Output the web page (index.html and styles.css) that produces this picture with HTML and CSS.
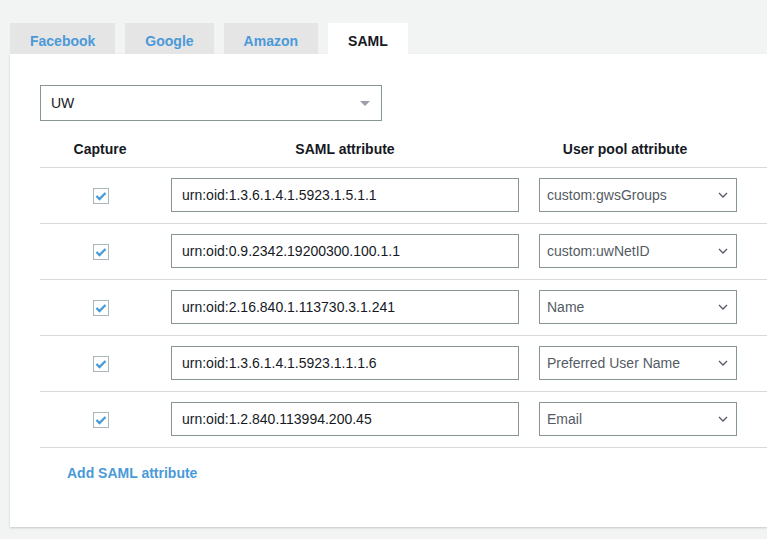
FILE: index.html
```html
<!DOCTYPE html>
<html>
<head>
<meta charset="utf-8">
<link rel="stylesheet" href="styles.css">
</head>
<body>
<div class="tabs">
  <div class="tab">Facebook</div>
  <div class="tab">Google</div>
  <div class="tab">Amazon</div>
  <div class="tab active">SAML</div>
</div>
<div class="panel">
  <div class="provider">
    <span>UW</span>
    <svg class="caret" width="12" height="7" viewBox="0 0 12 7"><path d="M1 1 L11 1 L6 6 Z" fill="#9aa0a6"/></svg>
  </div>
  <div class="table">
    <div class="row head">
      <div class="c1">Capture</div>
      <div class="c2">SAML attribute</div>
      <div class="c3">User pool attribute</div>
    </div>
    <div class="row">
      <div class="c1"><span class="check"><svg width="12" height="10" viewBox="0 0 12 10"><path d="M1.5 5 L4.5 8 L10.5 2" fill="none" stroke="#4a9ad8" stroke-width="2.4"/></svg></span></div>
      <div class="c2"><div class="field">urn:oid:1.3.6.1.4.1.5923.1.5.1.1</div></div>
      <div class="c3"><div class="pick"><span>custom:gwsGroups</span><svg width="10" height="6" viewBox="0 0 10 6"><path d="M1 1 L5 5 L9 1" fill="none" stroke="#545b64" stroke-width="1.3"/></svg></div></div>
    </div>
    <div class="row">
      <div class="c1"><span class="check"><svg width="12" height="10" viewBox="0 0 12 10"><path d="M1.5 5 L4.5 8 L10.5 2" fill="none" stroke="#4a9ad8" stroke-width="2.4"/></svg></span></div>
      <div class="c2"><div class="field">urn:oid:0.9.2342.19200300.100.1.1</div></div>
      <div class="c3"><div class="pick"><span>custom:uwNetID</span><svg width="10" height="6" viewBox="0 0 10 6"><path d="M1 1 L5 5 L9 1" fill="none" stroke="#545b64" stroke-width="1.3"/></svg></div></div>
    </div>
    <div class="row">
      <div class="c1"><span class="check"><svg width="12" height="10" viewBox="0 0 12 10"><path d="M1.5 5 L4.5 8 L10.5 2" fill="none" stroke="#4a9ad8" stroke-width="2.4"/></svg></span></div>
      <div class="c2"><div class="field">urn:oid:2.16.840.1.113730.3.1.241</div></div>
      <div class="c3"><div class="pick"><span>Name</span><svg width="10" height="6" viewBox="0 0 10 6"><path d="M1 1 L5 5 L9 1" fill="none" stroke="#545b64" stroke-width="1.3"/></svg></div></div>
    </div>
    <div class="row">
      <div class="c1"><span class="check"><svg width="12" height="10" viewBox="0 0 12 10"><path d="M1.5 5 L4.5 8 L10.5 2" fill="none" stroke="#4a9ad8" stroke-width="2.4"/></svg></span></div>
      <div class="c2"><div class="field">urn:oid:1.3.6.1.4.1.5923.1.1.1.6</div></div>
      <div class="c3"><div class="pick"><span>Preferred User Name</span><svg width="10" height="6" viewBox="0 0 10 6"><path d="M1 1 L5 5 L9 1" fill="none" stroke="#545b64" stroke-width="1.3"/></svg></div></div>
    </div>
    <div class="row">
      <div class="c1"><span class="check"><svg width="12" height="10" viewBox="0 0 12 10"><path d="M1.5 5 L4.5 8 L10.5 2" fill="none" stroke="#4a9ad8" stroke-width="2.4"/></svg></span></div>
      <div class="c2"><div class="field">urn:oid:1.2.840.113994.200.45</div></div>
      <div class="c3"><div class="pick"><span>Email</span><svg width="10" height="6" viewBox="0 0 10 6"><path d="M1 1 L5 5 L9 1" fill="none" stroke="#545b64" stroke-width="1.3"/></svg></div></div>
    </div>
  </div>
  <a class="add" href="#">Add SAML attribute</a>
</div>
</body>
</html>
```

FILE: styles.css
```css
html, body {
  margin: 0;
  padding: 0;
  overflow: hidden;
}
body {
  background: #f2f3f3;
  font-family: "Liberation Sans", Arial, sans-serif;
  font-size: 14px;
  color: #16191f;
  width: 767px;
  height: 539px;
}
.tabs {
  display: flex;
  gap: 10px;
  padding: 23px 0 0 10px;
}
.tab {
  height: 31px;
  line-height: 36px;
  padding: 0 20px;
  background: #e6e5e6;
  color: #4a9ad8;
  font-weight: bold;
  font-size: 14px;
}
.tab.active {
  background: #fff;
  color: #16191f;
}
.panel {
  margin-left: 10px;
  width: 727px;
  height: 442px;
  background: #fff;
  box-shadow: 0 1px 2px rgba(0, 0, 0, 0.18);
  padding: 31px 0 0 30px;
}
.provider {
  width: 320px;
  height: 34px;
  border: 1px solid #879596;
  display: flex;
  align-items: center;
  justify-content: space-between;
  padding: 0 10px 0 10px;
  color: #16191f;
}
.table {
  margin-top: 10px;
}
.row {
  display: grid;
  grid-template-columns: 120px 370px 217px;
  align-items: start;
  height: 55px;
  border-top: 1px solid #d5dbdb;
}
.row:last-child {
  border-bottom: 1px solid #d5dbdb;
}
.row.head {
  height: 36px;
  align-items: center;
  border-top: none;
  font-weight: bold;
  color: #16191f;
  text-align: center;
}
.row.head .c3 {
  width: 190px;
}
.c1 {
  display: flex;
  justify-content: center;
  margin-top: 20px;
}
.head .c1, .head .c2, .head .c3 {
  display: block;
  margin-top: 0;
}
.c2, .c3 {
  margin-top: 10px;
}
.check {
  width: 14px;
  height: 14px;
  border: 1px solid #aab7b8;
  display: flex;
  align-items: center;
  justify-content: center;
  background: #fff;
  margin-left: 1px;
}
.field {
  margin-left: 11px;
  width: 336px;
  height: 32px;
  line-height: 32px;
  border: 1px solid #879596;
  padding-left: 10px;
  color: #16191f;
}
.pick {
  margin-left: 9px;
  width: 181px;
  height: 32px;
  border: 1px solid #879596;
  display: flex;
  align-items: center;
  justify-content: space-between;
  padding: 0 8px 0 7px;
  color: #545b64;
}
.add {
  display: inline-block;
  margin: 17px 0 0 27px;
  color: #4a9ad8;
  font-weight: bold;
  text-decoration: none;
  font-size: 14px;
}
```
